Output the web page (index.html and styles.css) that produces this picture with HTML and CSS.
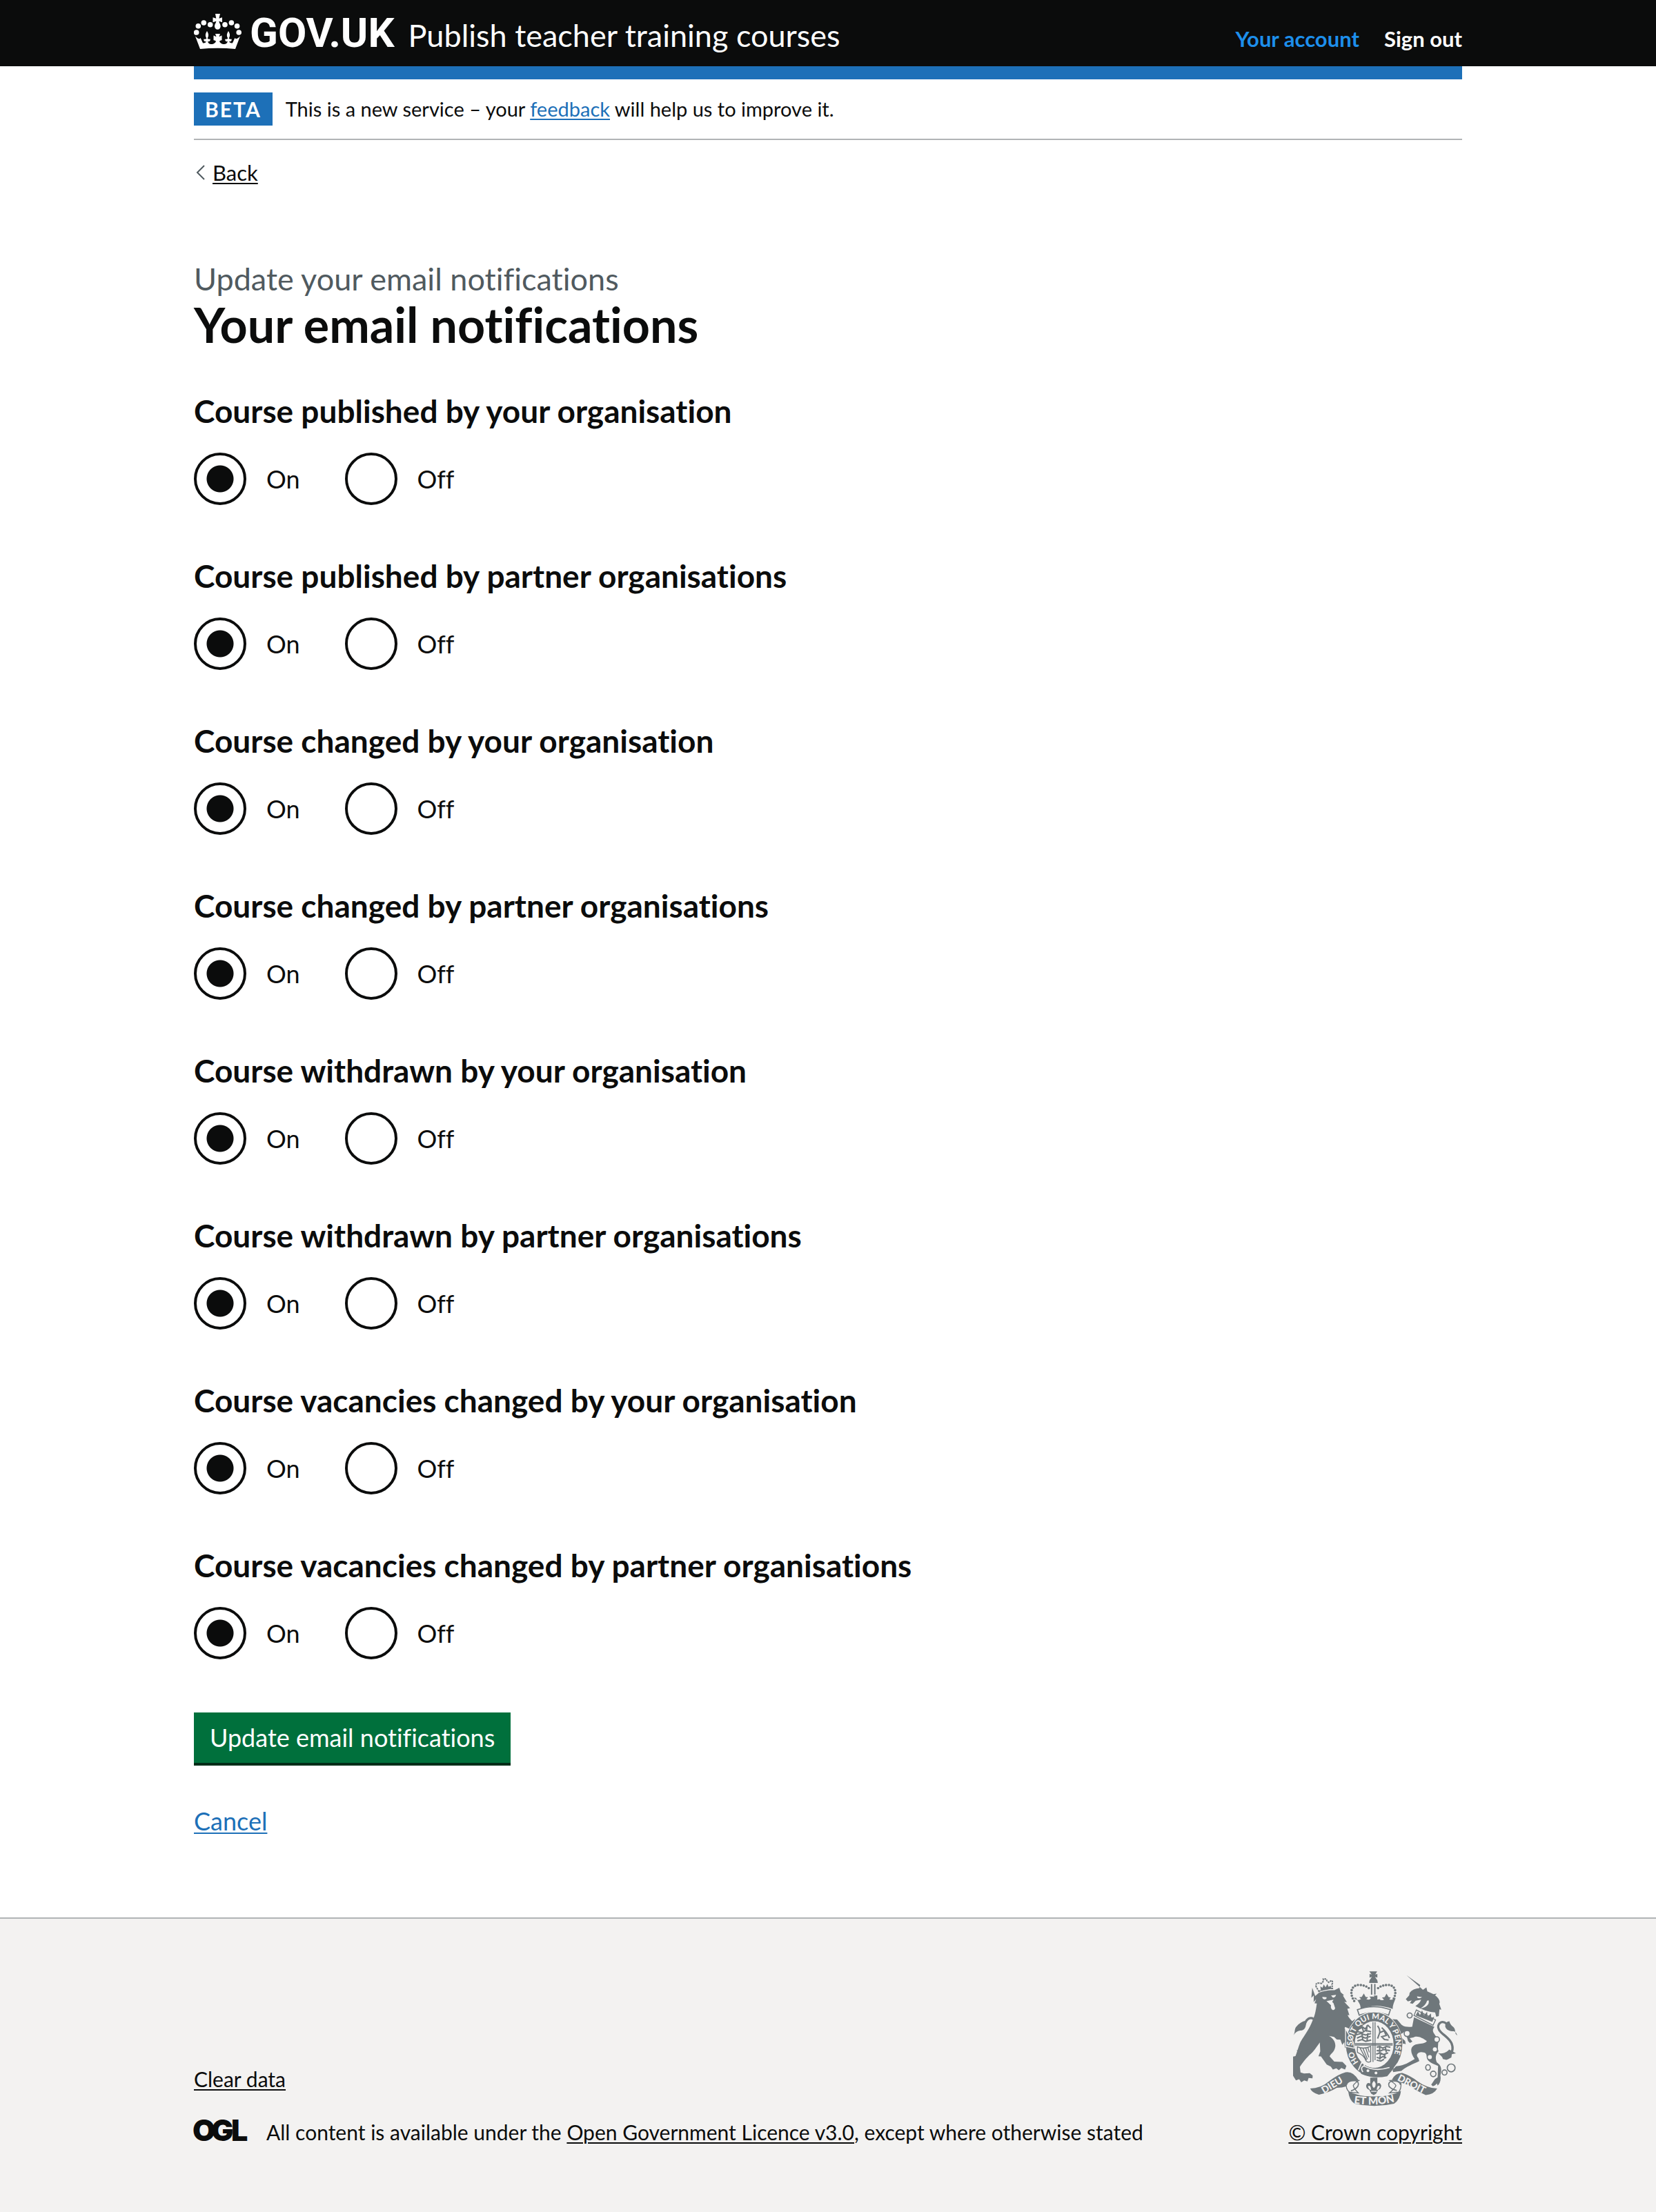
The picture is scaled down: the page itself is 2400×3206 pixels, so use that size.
FILE: index.html
```html
<!DOCTYPE html>
<html lang="en">
<head>
<meta charset="utf-8">
<meta name="viewport" content="width=device-width, initial-scale=1">
<title>Your email notifications - Publish teacher training courses - GOV.UK</title>
<link rel="stylesheet" href="styles.css">
</head>
<body>
<header class="header">
  <div class="container header-row">
    <a class="header-logo" href="#"><svg class="crown" viewBox="0 0 69 51" aria-hidden="true"><g fill="currentColor"><circle cx="3.7" cy="27" r="3.8"/><circle cx="6.3" cy="17.7" r="3.8"/><circle cx="14.3" cy="13" r="3.8"/><circle cx="23.7" cy="15.7" r="3.8"/><circle cx="45" cy="15.7" r="3.8"/><circle cx="54.4" cy="13" r="3.8"/><circle cx="62.6" cy="17.7" r="3.8"/><circle cx="65.2" cy="27" r="3.8"/><path d="M31 0h7l-1.6 6.8 4.6-1.6v7l-4.6-1.4c.2 2.700 2.300 4 2.300 7.700a4.400 4.900 0 0 1-8.700 0c0-3.700 2.200-5 2.300-7.700l-4.800 1.400v-7l4.800 1.600z"/><path d="M9 51 2 32.500c2 2 3.500 3.300 5.600 3.700 1 .2 1.700-.5 1.700-1.400 2 2.600 2.200 5.700 4 7.700 2 .4 4.500-.8 4.500-2.700-2.200 1.200-4.300-1-3.300-3.300 1.500.6 2.800.3 3.800-1-2.500-4.500-1.300-7 .7-10.500 2 3.500 3.200 6 .7 10.500 1 1.300 2.300 1.600 3.800 1 1 2.300-1.100 4.500-3.300 3.300 0 3.200 3.300 4.700 6.500 4.200 2.300-.4 4.700-2 5.400-4.300-1.500-.6-2.300-1.600-3.600-1.300v-6.800c1.300.3 2.400 1.300 4 1.600L31 29h7l-1.500 4.200c1.600-.3 2.700-1.300 4-1.600v6.800c-1.300-.3-2.100.7-3.600 1.300.7 2.300 3.100 3.900 5.400 4.300 3.200.5 6.500-1 6.500-4.200-2.200 1.200-4.300-1-3.300-3.300 1.500.6 2.800.3 3.800-1-2.500-4.500-1.300-7 .7-10.500 2 3.500 3.200 6 .7 10.500 1 1.300 2.300 1.600 3.800 1 1 2.300-1.100 4.500-3.300 3.300 0 1.900 2.500 3.100 4.500 2.700 1.800-2 2-5.100 4-7.700 0 .9.700 1.600 1.700 1.400 2.100-.4 3.600-1.700 5.600-3.700L60 51q-25.500-2.500-51 0z"/></g></svg>GOV.UK</a>
    <a class="header-service" href="#">Publish teacher training courses</a>
    <nav class="header-nav" aria-label="Account">
      <a class="is-active" href="#">Your account</a>
      <a href="#">Sign out</a>
    </nav>
  </div>
</header>

<div class="container">
  <div class="phase">
    <strong class="tag">BETA</strong>
    <span>This is a new service – your <a class="link" href="#">feedback</a> will help us to improve it.</span>
  </div>
  <div class="back">
    <svg class="chevron" viewBox="0 0 13 22" aria-hidden="true"><path d="M12 1 2 11l10 10" fill="none" stroke="#505a5f" stroke-width="2"/></svg>
    <a class="link-dark" href="#">Back</a>
  </div>

  <main>
    <h1 class="title"><span class="caption">Update your email notifications</span>Your email notifications</h1>
    <form class="form">
      <fieldset class="group">
        <legend>Course published by your organisation</legend>
        <div class="radios">
          <label class="radio"><input type="radio" name="n1" checked>On</label>
          <label class="radio"><input type="radio" name="n1">Off</label>
        </div>
      </fieldset>
      <fieldset class="group">
        <legend>Course published by partner organisations</legend>
        <div class="radios">
          <label class="radio"><input type="radio" name="n2" checked>On</label>
          <label class="radio"><input type="radio" name="n2">Off</label>
        </div>
      </fieldset>
      <fieldset class="group">
        <legend>Course changed by your organisation</legend>
        <div class="radios">
          <label class="radio"><input type="radio" name="n3" checked>On</label>
          <label class="radio"><input type="radio" name="n3">Off</label>
        </div>
      </fieldset>
      <fieldset class="group">
        <legend>Course changed by partner organisations</legend>
        <div class="radios">
          <label class="radio"><input type="radio" name="n4" checked>On</label>
          <label class="radio"><input type="radio" name="n4">Off</label>
        </div>
      </fieldset>
      <fieldset class="group">
        <legend>Course withdrawn by your organisation</legend>
        <div class="radios">
          <label class="radio"><input type="radio" name="n5" checked>On</label>
          <label class="radio"><input type="radio" name="n5">Off</label>
        </div>
      </fieldset>
      <fieldset class="group">
        <legend>Course withdrawn by partner organisations</legend>
        <div class="radios">
          <label class="radio"><input type="radio" name="n6" checked>On</label>
          <label class="radio"><input type="radio" name="n6">Off</label>
        </div>
      </fieldset>
      <fieldset class="group">
        <legend>Course vacancies changed by your organisation</legend>
        <div class="radios">
          <label class="radio"><input type="radio" name="n7" checked>On</label>
          <label class="radio"><input type="radio" name="n7">Off</label>
        </div>
      </fieldset>
      <fieldset class="group">
        <legend>Course vacancies changed by partner organisations</legend>
        <div class="radios">
          <label class="radio"><input type="radio" name="n8" checked>On</label>
          <label class="radio"><input type="radio" name="n8">Off</label>
        </div>
      </fieldset>
      <button class="button" type="submit">Update email notifications</button>
    </form>
    <p class="cancel"><a class="link" href="#">Cancel</a></p>
  </main>
</div>

<footer class="footer">
  <div class="container footer-row">
    <div class="footer-meta">
      <a class="link-dark" href="#">Clear data</a>
      <div class="licence">
        <svg class="ogl" viewBox="0 0 78 38" role="img" aria-label="Open Government Licence"><g fill="#0b0c0c" font-family="Inter, sans-serif" font-weight="900" font-size="43"><text x="-2" y="32">O</text><text x="25" y="32">G</text><text x="54" y="32">L</text></g></svg>
        <span>All content is available under the <a class="link-dark" href="#">Open Government Licence v3.0</a>, except where otherwise stated</span>
      </div>
    </div>
    <div class="copyright">
      <svg class="crest" viewBox="72 50 718 590" aria-hidden="true">
        <defs>
          <path id="ring" d="M425 481A94 111 0 0 1 425 259A94 111 0 0 1 425 481"/>
          <path id="scroll" d="M336 626Q425 640 514 620"/>
        </defs>
        <g fill="#6f777b">
          <!-- crown over the shield -->
          <path d="M404 51h34l-8 13 9-2v16l-10-3 6 9c5 5 5 12 6 17h-38c1-5 1-12 6-17l6-9-10 3V62l9 2z"/>
          <path d="M411 106h6v46h-6zM425 106h6v46h-6z"/>
          <path fill="none" stroke="#6f777b" stroke-width="11" stroke-linecap="round" stroke-dasharray="0 12.500" d="M338 180C315 145 325 108 362 110C385 111 402 122 406 128M504 180C529 145 518 108 482 110C459 111 442 122 438 128"/>
          <path d="M336 166q8 10 22 10l10-4-8-8 11-2 9-15 8 15 11 2-8 8q14 6 20-4l-7-7h17l5 1-3-6h16v18l9-2q8 8 20 2l-9-9 12-2 8-15 9 15 10 2-7 8q15 6 28-7c-5 18-13 28-13 49q-71-28-140 0c2-20-12-33-20-49z"/>
          <path d="M352 218q70-26 144 0l-8 24q-64-24-128 0z" fill="#f3f2f1" stroke="#6f777b" stroke-width="5"/>
          <!-- lion -->
          <path d="M184 138q28-14 59-13l-2-17q6-12-2-18l-12 9-8-7-3-8h-13l1 9-8 10-12-1q-16-2-12 16z" fill="none" stroke="#6f777b" stroke-width="6" stroke-dasharray="8 3"/>
          <path d="M190 116l10 6 5-14 8 12 8-14 5 12 10-4 3 13-46 9z"/>
          <path d="M168 158l17-15q35-13 67-10l21-11 6 20 14 12-4 3 17 28-11-1 25 27-12 3 9 28-8-1c6 14 14 20 20 27l14-10-11 25-13 19-20-9-3 5 22 25 14 28 10 25-5 19-12-3-9-22-6 24-13-12-2-23-9 12-8-22-16-1-12-11-22-5c25 14 30 35 27 50-5 24-22 28-24 40l20 22 36 2 17 17-6 16-16-7-11 10-11-8-15 5-9-13-18-9-25-35-11-1 8-21-2-39c-16 22-27 42-47 56-16 17-32 36-40 51l3 24 15 4 25-1 13 10-1 12-17-1-5 15-14-5-13 9-9-14-14 5-14-22-5-24-11-10 5-16-3-21 12-10 14-3c8-20 13-42 21-60 20-34 40-58 54-96 12-27 14-47 18-73l-10-1 7-18-11 13 1-30-11 11 4-44z"/>
          <path d="M73 329c10-14 1-27 15-40q16-18 38-23l8-10-7 30c-3 18-14 22-25 23-12 1-20 9-29 20z"/>
          <path fill="none" stroke="#6f777b" stroke-width="10" d="M124 275c18-36 50-20 42 8-7 30-40 60-57 85-17 26-8 37 15 38"/>
          <path d="M88 393l15 10 36-13-8 13 7-1-24 17-12-3q-12-5-14-23z"/>
          <g fill="#f3f2f1"><path d="M199 162l18 2q3 8-8 9-10-1-10-11zM237 156l22-3q-3 12-14 12zM217 180l31-6-6 10 6 6 7 22q-4 10-11 7-10-6-7-20l-10-10z"/></g>
          <!-- unicorn -->
          <path d="M566 67l72 64 15-10 4 17 27 12 14-2-7 7q20 14 20 32l-2 5 9 26-8-2-3 30-11 3-5-19q-38-1-86-28 20-13 25-28l-24 5-13 13-12-3 8-12-17 5-9-10 15-17 2-11q14-18 42-20l4-14z"/>
          <path fill="#f3f2f1" stroke="#6f777b" stroke-width="4" d="M609 219l84 43-11 24-83-43z"/>
          <path d="M606 243l10-18 9 17 9-21 9 22 13-16 2 22 15-15 1 21 13-6-8 22z"/>
          <path d="M599 251l89 42c-14 18-3 26 10 46 15 20-1 40 8 60-12 12-16 30-8 48 20 14 23 27 16 58 4 20-3 36-12 44l-3-9-9 8-9 4-7-7 16-24 12-8 2-50c-24-10-51-20-50-42 0-14-8-17-24-18-18 2-24 14-12 26l4 13c-30 14-60 26-78 43l-22 3-14 2-3-11 16-14q34-3 60-20l21-12c-22-30-24-62 20-66 18-2 27-4 33-12-20-16-44-26-59-16l-16 3 12 15-11 6-8-8-7-24 8-3c-2-18-10-19-22-10l-18 12 26 24 3 14-11-3-5 6-10-10-8 2-24-38c-2-15 5-24 15-27l-16-23-8 10-13-9 2-11 18-6 22 2 20 23c12 8 26 10 46 8z"/>
          <path d="M788 330c-14-6-5-26-17-36q-14-10-18-26-19 2-18 23c5 17 20 21 36 21 11 2 13 10 17 18z"/>
          <path fill="none" stroke="#6f777b" stroke-width="10" d="M742 280c-24-20-46 2-34 25 10 20 40 30 54 58 10 24 4 40-8 49"/>
          <path d="M704 406c14 8 38 0 48-14l16 8 14 8-18 4-2 14-14 8-8 3-15-4-3-8z"/>
          <g fill="#f3f2f1" stroke="#6f777b" stroke-width="5"><circle cx="580" cy="243" r="11"/><circle cx="569" cy="322" r="13"/><circle cx="698" cy="348" r="12"/><ellipse cx="660" cy="470" rx="10" ry="12"/><circle cx="683" cy="498" r="12"/><circle cx="732" cy="492" r="11"/><circle cx="761" cy="472" r="17"/></g>
          <g fill="#f3f2f1"><circle cx="690" cy="391" r="9"/><circle cx="668" cy="425" r="9"/><path d="M612 160l22 3q-9 8-20 4zM663 177q6 26-36 36 24-15 29-34z"/></g>
          <!-- garter and shield -->
          <ellipse cx="425" cy="370" rx="125" ry="144" fill="#f3f2f1"/>
          <ellipse cx="425" cy="370" rx="104" ry="121" fill="none" stroke="#6f777b" stroke-width="38"/>
          <path d="M362 452l18 8q45 24 110 2l22 10-30 36q-60 14-114-10z"/>
          <path fill="none" stroke="#f3f2f1" stroke-width="5" d="M378 462q50 28 114 8M356 482l14-32q14 0 12 14-20 4-6 26"/>
          <path d="M300 300l34 60 5 26-38-8z" stroke="#f3f2f1" stroke-width="4"/>
          <circle cx="398" cy="484" r="6" fill="#f3f2f1"/><circle cx="433" cy="494" r="6" fill="#f3f2f1"/>
          <path fill="none" stroke="#6f777b" stroke-width="4" d="M420 272v174M429 272v166M340 366h166M340 372h166"/>
          <path fill="none" stroke="#6f777b" stroke-width="6" d="M358 302l18-8 10 8 12-16 12 12M352 314l22 4 14-10 24 6M346 328l20-6 22 6 24-6M350 342l18-8 18 8 24-8M352 354l20-6 16 8 24-6M372 290l6 22M394 286l-2 28M372 322l4 30M398 320l-4 34M440 288q14 20 8 34l-8 22M458 296q24 22 34 46M450 318l18-8 10 20-20 6 12 12 18 2M436 382l14-4 12 8 16-8 18 4M436 396l16 2 14-6 28 4M434 412l18-6 14 8 20-8M436 426l14 4 14-8 14 6M436 438l18 4 14-8M450 380l-2 24M474 380l4 24M452 410l-2 26M472 410l-2 22"/>
          <path fill="none" stroke="#6f777b" stroke-width="4" d="M352 380q28 12 58-2v66q-16 8-22-6-8-22-36-34zM364 386l28 52M376 386l20 48M388 384l14 42M398 384l6 20"/>
          <g fill="#f3f2f1" font-family="Lato, sans-serif" font-weight="900" font-size="34"><text><textPath href="#ring" startOffset="78">HO</textPath></text><text><textPath href="#ring" startOffset="156">SOIT QUI MAL Y PENSE</textPath></text></g>
          <!-- motto ribbon -->
          <path d="M408 514h31v26q12-8 17 10-2 16-14 18l-8 16-11 6-11-6-8-16q-14-4-14-18 4-18 18-10z"/>
          <path fill="#f3f2f1" d="M424 528q16 18 0 32-16-14 0-32zM398 552q8-6 12 5l2 11q-10 0-14-16zM450 552q-8-6-12 5l-2 11q10 0 14-16zM412 572h24v4h-24z"/>
          <path d="M146 562q46 0 80-30 40-32 74-41 34-6 58 36-18-2-28 6-20 26-68 26-36 22-78 30-30-8-38-27z"/>
          <path d="M700 562q-44-2-86-32-30-24-66-36-30-2-46 30 12 2 22 6 30 10 50 16 30 24 76 44 36-2 50-28z"/>
          <path fill="#f3f2f1" stroke="#6f777b" stroke-width="4" d="M358 527q-40-4-54 12-4 24 12 38l40 4q-20-20-22-32 4-10 24-22zM494 527q46-4 48 12 2 24-10 38l-40 4q24-20 28-32-4-10-26-22z"/>
          <path d="M312 574q48 24 112 22 70 2 118-24-4 38-30 56-88 20-172 0-24-14-28-54z"/>
          <path fill="none" stroke="#6f777b" stroke-width="5" d="M304 546q6-20 40-18 18 6 10 24-10 14-30 20M540 546q-2-20-40-16-16 6-10 22 10 14 34 18"/>
          <g fill="#f3f2f1" font-family="Lato, sans-serif" font-weight="900"><text font-size="46"><textPath href="#scroll">ET MON</textPath></text><text font-size="42" transform="translate(206 585) rotate(-31)">DIEU</text><text font-size="42" transform="translate(524 525) rotate(27)">DROIT</text></g>
        </g>
      </svg>
      <a class="link-dark" href="#">© Crown copyright</a>
    </div>
  </div>
</footer>
</body>
</html>
```
FILE: styles.css
```css
* { box-sizing: border-box; }

body {
  margin: 0;
  min-height: 100vh;
  display: flex;
  flex-direction: column;
  background: #fff;
  color: #0b0c0c;
  font-family: Lato, "Liberation Sans", sans-serif;
  font-size: 36px;
  line-height: 48px;
  font-variant-ligatures: none;
}

.container {
  width: calc(100% - 120px);
  max-width: 1838px;
  margin: 0 auto;
}

a { color: inherit; text-decoration: none; }

.link, .link-dark {
  text-decoration: underline;
  text-decoration-thickness: 2px;
  text-underline-offset: 3px;
}
.link { color: #1d70b8; }

/* Header */
.header { background: #0b0c0c; color: #fff; }
.header-row {
  display: flex;
  align-items: baseline;
  padding: 18px 0;
}
.header-logo {
  font-family: Roboto, "Liberation Sans", sans-serif;
  font-size: 60px;
  font-weight: 700;
  line-height: 60px;
  white-space: nowrap;
}
.crown {
  width: 69px;
  height: 51px;
  margin-right: 12px;
  vertical-align: -3px;
}
.header-service {
  margin-left: 20px;
  font-size: 45px;
  line-height: 50px;
}
.header-nav {
  display: flex;
  gap: 36px;
  margin-left: auto;
  font-size: 31px;
  font-weight: 700;
  line-height: 38px;
}
.is-active { color: #1d8feb; }

/* Phase banner and back link */
.phase {
  display: flex;
  gap: 19px;
  padding: 19px 0;
  border-top: 19px solid #1d70b8;
  border-bottom: 2px solid #b1b4b6;
  font-size: 29px;
}
.tag {
  padding: 0 16px;
  background: #1d70b8;
  color: #fff;
  font-size: 30px;
  letter-spacing: 2px;
}
.back {
  display: flex;
  align-items: center;
  gap: 11px;
  padding: 28px 0 0 3px;
  font-size: 31px;
  line-height: 38px;
}
.chevron { width: 13px; height: 22px; }

/* Main content */
.title {
  margin: 106px 0 60px;
  font-size: 70px;
  line-height: 74px;
}
.caption {
  display: block;
  color: #505a5f;
  font-size: 45px;
  font-weight: 400;
  line-height: 58px;
}
.form {
  display: flex;
  flex-direction: column;
  align-items: flex-start;
  gap: 74px;
}
.group { margin: 0; padding: 0; border: 0; }
.group legend {
  padding: 0;
  margin-bottom: 31px;
  font-size: 46px;
  font-weight: 700;
  line-height: 58px;
}
.radios { display: flex; gap: 65px; }
.radio { display: flex; align-items: center; gap: 29px; }
.radio input {
  appearance: none;
  width: 76px;
  height: 76px;
  margin: 0;
  border: 4px solid #0b0c0c;
  border-radius: 50%;
  background: #fff;
}
.radio input:checked {
  background: radial-gradient(circle, #0b0c0c 19px, #fff 20px);
}
.button {
  margin: 3px 0 0;
  padding: 12px 23px 13px;
  border: 0;
  background: #00703c;
  box-shadow: 0 4px 0 #002d18;
  color: #fff;
  font: inherit;
}
.cancel { margin: 60px 0 116px; }

/* Footer */
.footer {
  flex-grow: 1;
  padding: 76px 0 97px;
  border-top: 2px solid #b1b4b6;
  background: #f3f2f1;
  font-size: 30px;
  line-height: 38px;
}
.footer-row {
  display: flex;
  align-items: flex-end;
  justify-content: space-between;
}
.footer-meta {
  display: flex;
  flex-direction: column;
  align-items: flex-start;
  gap: 39px;
}
.licence { display: flex; gap: 27px; }
.ogl { flex: none; width: 78px; height: 38px; overflow: visible; }
.copyright {
  display: flex;
  flex-direction: column;
  align-items: center;
  gap: 18px;
}
.crest { width: 239px; height: 196px; }
```
